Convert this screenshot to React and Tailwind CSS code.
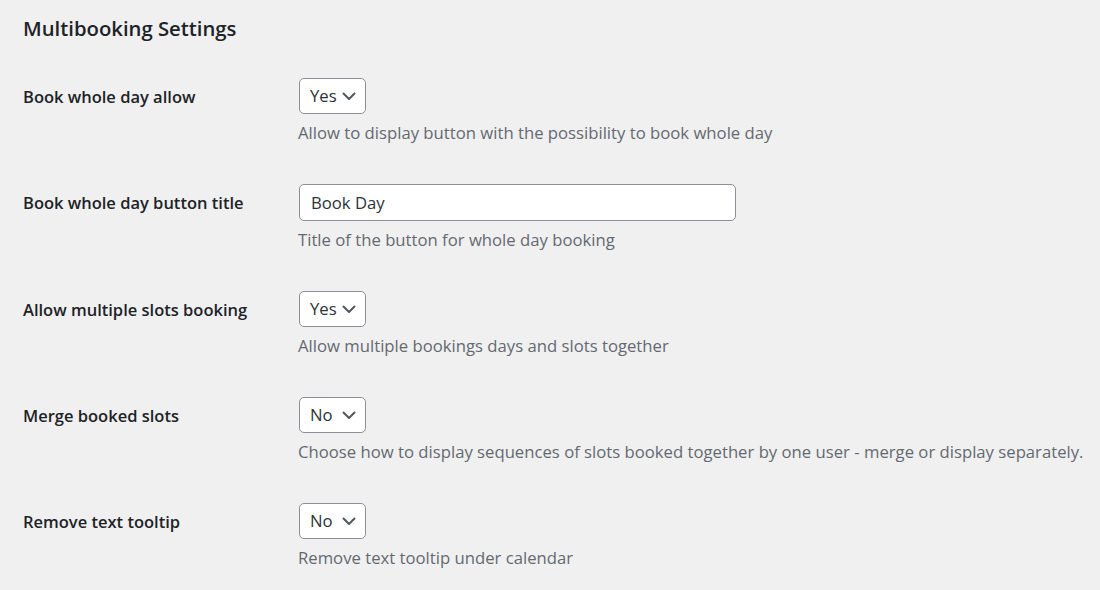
import React from 'react';

const rows = [
  { label: 'Book whole day allow', type: 'select', value: 'Yes', desc: 'Allow to display button with the possibility to book whole day' },
  { label: 'Book whole day button title', type: 'text', value: 'Book Day', desc: 'Title of the button for whole day booking' },
  { label: 'Allow multiple slots booking', type: 'select', value: 'Yes', desc: 'Allow multiple bookings days and slots together' },
  { label: 'Merge booked slots', type: 'select', value: 'No', desc: 'Choose how to display sequences of slots booked together by one user - merge or display separately.' },
  { label: 'Remove text tooltip', type: 'select', value: 'No', desc: 'Remove text tooltip under calendar' },
];

function Chevron() {
  return (
    <svg width="14" height="9" viewBox="0 0 14 9" className="shrink-0">
      <path d="M1.5 1.5l5.5 5.5 5.5-5.5" fill="none" stroke="#50575e" strokeWidth="2" strokeLinecap="round" strokeLinejoin="round" />
    </svg>
  );
}

function Field({ type, value }) {
  if (type === 'text') {
    return (
      <div className="w-[437px] h-[37px] bg-white border border-[#8c8f94] rounded-[5px] flex items-center pl-[11px] text-[16.7px] text-[#2c3338]">
        {value}
      </div>
    );
  }
  return (
    <div className="w-[67px] h-[36px] bg-white border border-[#8c8f94] rounded-[5px] flex items-center justify-between pl-[10px] pr-[9px] text-[16.7px] text-[#2c3338]">
      <span>{value}</span>
      <Chevron />
    </div>
  );
}

export default function App() {
  return (
    <div className="w-[1100px] h-[590px] overflow-hidden bg-[#f0f0f1] pl-[23px] pt-[14px] font-['Segoe_UI','Open_Sans',sans-serif]">
      <h2 className="text-[20.3px] leading-[28px] font-semibold text-[#1d2327]">Multibooking Settings</h2>
      <div className="mt-[36px] flex flex-col gap-[39px]">
        {rows.map((r) => (
          <div key={r.label} className="flex">
            <div className="w-[276px] h-[36px] pt-[2px] flex items-center text-[16.5px] font-semibold text-[#1d2327]">{r.label}</div>
            <div className="flex flex-col gap-[7px]">
              <Field type={r.type} value={r.value} />
              <p className="-ml-[1px] text-[16.7px] leading-[24px] text-[#646970] whitespace-nowrap">{r.desc}</p>
            </div>
          </div>
        ))}
      </div>
    </div>
  );
}
